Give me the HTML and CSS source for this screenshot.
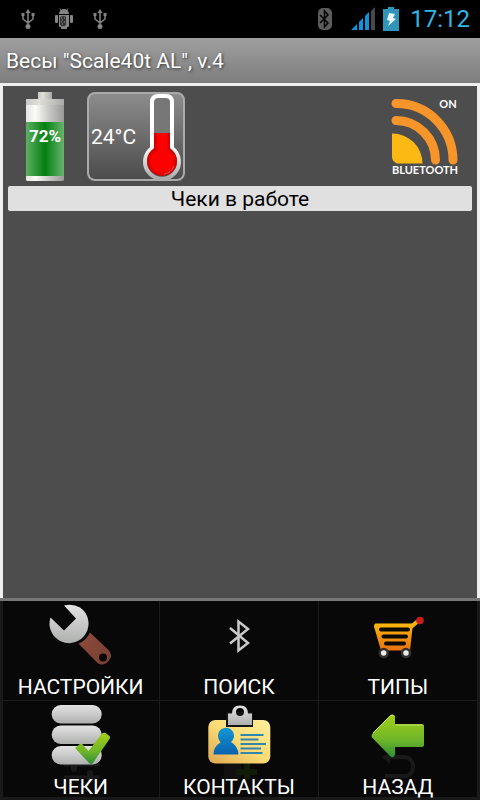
FILE: index.html
```
<!DOCTYPE html>
<html lang="ru">
<head>
<meta charset="utf-8">
<meta name="viewport" content="width=device-width, initial-scale=1">
<title>Весы</title>
<link rel="stylesheet" href="styles.css">
</head>
<body>
<div class="status">
  <div class="status-group">
    <svg width="16" height="22" viewBox="0 0 16 22"><g class="usb"><path d="M8 18V3M3 7v4l5 4 5-4V7"/><path class="solid" d="M5.500 5 8 1l2.500 4zM1.500 5h3v3h-3zM11.500 5h3v3h-3z"/><circle class="solid" cx="8" cy="18.500" r="2.500"/></g></svg>
    <svg width="20" height="22" viewBox="0 0 20 22"><g fill="#858585"><path d="M5 6a5 5 0 0 1 10 0z"/><path d="M5 7h10v11q0 1-1 1h-1v2H7v-2H6q-1 0-1-1z"/><rect x="1" y="7" width="3" height="8" rx="1"/><rect x="16" y="7" width="3" height="8" rx="1"/></g><path d="M6 .500 7.500 3M14 .500 12.500 3" stroke="#858585"/><path d="M6 9q4-2 6 0v8q-2 2-5 1l-1-2z" fill="#333"/><path d="M7 10h1M10 10h1M8 12h1M7 14h1M10 14h1M8 16h1" stroke="#999"/></svg>
    <svg width="16" height="22" viewBox="0 0 16 22"><g class="usb"><path d="M8 18V3M3 7v4l5 4 5-4V7"/><path class="solid" d="M5.500 5 8 1l2.500 4zM1.500 5h3v3h-3zM11.500 5h3v3h-3z"/><circle class="solid" cx="8" cy="18.500" r="2.500"/></g></svg>
  </div>
  <div class="status-group status-right">
    <svg width="16" height="24" viewBox="0 0 16 24"><rect x="1" y="1" width="14" height="22" rx="5" fill="#5c5c5c"/><path d="m3 8 8 8-3.500 4V4L11 8l-8 8" fill="none" stroke="#000" stroke-width="1.500"/></svg>
    <svg class="signal" width="24" height="24" viewBox="0 0 24 24"><path d="m0 23 6-6v6zM8 23v-8l4-4v12zM14 23V9l4-4v18z" fill="#0c94dc"/><path d="M20 23V4l4-4v23z" fill="#484848"/></svg>
    <svg width="16" height="24" viewBox="0 0 16 24"><path d="M0 2h5V0h6v2h5v22H0z" fill="#3194b9"/><path d="m6 6 6 1-2 4 3 1-8 7 2-5-3-1z" fill="#e8f6fc"/></svg>
    <time class="clock">17:12</time>
  </div>
</div>
<header class="title"><h1>Весы "Scale40t AL", v.4</h1></header>
<main class="screen">
  <div class="gauges">
    <div class="battery">
      <svg width="38" height="89" viewBox="0 0 38 89">
        <defs>
          <linearGradient id="metal"><stop offset="0" stop-color="#e6e4e0"/><stop offset=".25" stop-color="#fbfaf6"/><stop offset=".6" stop-color="#c8c9c7"/><stop offset="1" stop-color="#999"/></linearGradient>
          <linearGradient id="shoulder"><stop offset="0" stop-color="#c8c8c8"/><stop offset=".35" stop-color="#e0dfda"/><stop offset="1" stop-color="#aaa"/></linearGradient>
          <linearGradient id="charge"><stop offset="0" stop-color="#5faf63"/><stop offset=".5" stop-color="#028010"/><stop offset="1" stop-color="#68b36c"/></linearGradient>
        </defs>
        <path d="M12 0h14v7H12z" fill="url(#shoulder)"/>
        <path d="M0 7h38v81q0 1-2 1H2q-2 0-2-1z" fill="url(#metal)"/>
        <path d="M0 7h38v6H0z" fill="url(#shoulder)"/>
        <path d="M0 30h38v54H0z" fill="url(#charge)"/>
      </svg>
      <span class="percent">72%</span>
    </div>
    <button class="temperature" type="button">
      <span>24°C</span>
      <svg width="40" height="86" viewBox="142 94 40 86">
        <defs><radialGradient id="mercury"><stop offset=".7" stop-color="#fe0000"/><stop offset="1" stop-color="#c90000"/></radialGradient>
        <linearGradient id="tube"><stop offset="0" stop-color="#c80000"/><stop offset=".3" stop-color="#f00"/><stop offset=".8" stop-color="#f00"/><stop offset="1" stop-color="#c00000"/></linearGradient>
        <linearGradient id="glass" x1="0" y1="0" x2="0" y2="1"><stop offset=".6" stop-color="#fff"/><stop offset="1" stop-color="#aaa"/></linearGradient></defs>
        <path d="M154 147v-42q0-7 5-7h6q5 0 5 7v42" fill="#777"/>
        <path d="M152 148v-46q0-6 6-6h8q6 0 6 6v46a17 17 0 1 1-20 0z" fill="none" stroke="url(#glass)" stroke-width="4"/>
        <circle cx="162" cy="161" r="15" fill="url(#mercury)"/>
        <path d="M154 133h16v18h-16z" fill="url(#tube)"/>
        <path d="M164 174q7-1 10-8" fill="none" stroke="#ff5a4a"/>
      </svg>
    </button>
    <svg class="link-state" width="70" height="80" viewBox="390 98 70 80">
      <path d="M392 133.500a30 30 0 0 1 30.500 30H397q-5-2-5-7z" fill="#fdb913"/>
      <path d="M396 103.500a56.500 57 0 0 1 57 56.500M396 120.500a39.500 40 0 0 1 39.500 39.500" fill="none" stroke="#f7942a" stroke-width="9" stroke-linecap="round"/>
      <text x="448" y="108" class="link-text">ON</text>
      <text x="425" y="174" class="link-text">BLUETOOTH</text>
    </svg>
  </div>
  <h2 class="list-title">Чеки в работе</h2>
</main>
<nav class="menu">
  <button type="button">
    <svg width="72" height="74" viewBox="44 601 72 74">
      <defs><linearGradient id="steel" x1="0" y1="0" x2="0" y2="1"><stop offset="0" stop-color="#e3e3e3"/><stop offset="1" stop-color="#aeb0ae"/></linearGradient>
      <linearGradient id="grip" x1="0" y1="0" x2="1" y2="1"><stop offset="0" stop-color="#914a3d"/><stop offset="1" stop-color="#744032"/></linearGradient></defs>
      <path d="M63 605.500q9-2 16 2a19.500 19.500 0 1 1-29.500 10L63 630.500l12-12z" fill="url(#steel)"/>
      <path d="m89 632.500 19 18q4 5 0 10-5 6-11 3l-19.500-20q8-3 11.500-11zM106 657.500a4 4 0 1 0-8 0 4 4 0 0 0 8 0z" fill="url(#grip)" fill-rule="evenodd"/>
    </svg>
    <span>НАСТРОЙКИ</span>
  </button>
  <button type="button">
    <svg width="72" height="74" viewBox="203 601 72 74"><path d="m230 628 18 15-9.500 7.500v-29L248 629l-18 14.500" fill="none" stroke="#c9c9c9" stroke-width="2.500"/></svg>
    <span>ПОИСК</span>
  </button>
  <button type="button">
    <svg width="72" height="74" viewBox="362 601 72 74">
      <defs><linearGradient id="cart" x1="0" y1="0" x2="0" y2="1"><stop offset="0" stop-color="#fab80c"/><stop offset="1" stop-color="#e8710f"/></linearGradient></defs>
      <path d="m411 627 7-6" stroke="#f5b50c" stroke-width="4"/>
      <path d="M376 623.500h37l-3 27h-29l-7-24q0-3 2-3z" fill="url(#cart)"/>
      <path d="M381 629.500h27M383.500 636.500h22.500M386 643.500h18" stroke="#0b0906" stroke-width="4" stroke-linecap="round"/>
      <circle cx="420" cy="620.500" r="3.800" fill="#c81e1c"/>
      <g fill="#eee" stroke="#343030" stroke-width="2.500"><circle cx="383.700" cy="653" r="4"/><circle cx="406" cy="653" r="4"/></g>
    </svg>
    <span>ТИПЫ</span>
  </button>
  <button type="button">
    <svg width="72" height="74" viewBox="45 701 72 74">
      <defs><linearGradient id="leaf" x1="0" y1="0" x2="0" y2="1"><stop offset="0" stop-color="#a5cf16"/><stop offset=".6" stop-color="#6eb52a"/><stop offset="1" stop-color="#2f8d36"/></linearGradient></defs>
      <path d="M64 765h36M64 777h36M74 761v8M90 773v8" stroke="#191919" stroke-width="3"/><path d="M74 764v5M90 773v5" stroke="#191919" stroke-width="6" stroke-linecap="round"/>
      <g fill="url(#steel)"><rect x="51.700" y="705" width="50" height="18.500" rx="9"/><rect x="51.700" y="725.500" width="50" height="18.500" rx="9"/><rect x="51.700" y="746" width="50" height="18.500" rx="9"/></g>
      <path d="m75 748 5-4q2-1 3 1l5.500 6 13-17q2-2 4-1l4 3q1 1 0 3L93 763q-2 2-4 0z" fill="url(#leaf)"/>
    </svg>
    <span>ЧЕКИ</span>
  </button>
  <button type="button">
    <svg width="72" height="74" viewBox="203 701 72 74">
      <defs><linearGradient id="card" x1="0" y1="1" x2="1" y2="0"><stop offset="0" stop-color="#dda750"/><stop offset=".5" stop-color="#fbdb75"/><stop offset="1" stop-color="#fdee9c"/></linearGradient>
      <linearGradient id="person" x1="0" y1="0" x2="0" y2="1"><stop offset="0" stop-color="#1396d4"/><stop offset="1" stop-color="#0862ad"/></linearGradient></defs>
      <path d="M224 762h17v18h-17z" fill="#101010"/><path d="M247 762v18M236 772h21" stroke="#101b08" stroke-width="6"/>
      <rect x="208.300" y="720" width="62" height="43.500" rx="7" fill="url(#card)"/>
      <path d="M226 712h27v15h-27z" fill="#141414"/>
      <path d="M228 713.500h4q0-8 8-8t8 8h4v11.500h-24zM244 712a4 4 0 1 0-8 0 4 4 0 0 0 8 0z" fill="url(#steel)" fill-rule="evenodd"/>
      <path d="M218 736a8 8 0 1 1 13 6q7 4 7.500 12.500h-25q0-8 7-12-2.500-3-2.500-6.500z" fill="url(#person)"/>
      <path d="M240.500 735h23M240.500 739.500h18M240.500 744H266M240.500 748.500H261M240.500 753h22" stroke="#3186ad" stroke-width="2"/>
    </svg>
    <span>КОНТАКТЫ</span>
  </button>
  <button type="button">
    <svg width="72" height="74" viewBox="362 701 72 74">
      <path d="M386 757h18c12 0 12 19 1 19h-20" fill="none" stroke="#191919" stroke-width="4"/><path d="m382 757 8-4v11z" fill="#191919"/>
      <path d="m372.500 733.500 17-17.500q3-3 5.500 0v8h27q2 0 2 2v19q0 2-2 2h-27v8q-2 4-5 1l-17.500-18q-2-2 0-4.500z" fill="url(#leaf)"/>
      <path d="m373 733 17-17q2-2 4 0M396 725h26" fill="none" stroke="#bfdf68"/>
    </svg>
    <span>НАЗАД</span>
  </button>
</nav>
</body>
</html>
```
FILE: styles.css
```
* { box-sizing: border-box; }
body {
  margin: 0;
  min-height: 100vh;
  display: flex;
  flex-direction: column;
  background: #4d4d4d;
  font-family: Roboto, "Liberation Sans", sans-serif;
  font-size: 21px;
  color: #fff;
}
svg { display: block; flex: none; overflow: visible; }
h1, h2 { margin: 0; font-size: 21px; font-weight: 400; }
button { font: inherit; color: inherit; cursor: pointer; }

.status {
  height: 38px;
  padding: 0 10px 0 20px;
  display: flex;
  align-items: center;
  justify-content: space-between;
  background: #000;
}
.status-group { display: flex; align-items: center; gap: 18px; }
.status-right { gap: 8px; }
.signal { margin-left: 10px; }
.usb { fill: none; stroke: #858585; stroke-width: 1.5; }
.usb .solid { fill: #858585; stroke: none; }
.clock { margin-left: 3px; font-size: 24px; line-height: 38px; color: #33b5e5; }

.title {
  height: 45px;
  padding: 0 6px;
  display: flex;
  align-items: center;
  background: linear-gradient(#9f9f9f, #7d7d7d);
  text-shadow: 1px 1px 3px #333;
}

.screen {
  flex: 1;
  padding: 6px 5px;
  border: 3px solid #efefef;
  border-bottom: 0;
  background: #4d4d4d;
}
.gauges { display: flex; align-items: flex-start; padding: 0 12px 0 18px; }
.battery { position: relative; }
.percent {
  position: absolute;
  inset: 34px 0 auto;
  display: flex;
  justify-content: center;
  font-size: 17px;
  line-height: 20px;
  font-weight: 700;
}
.temperature {
  height: 89px;
  margin-left: 23px;
  padding: 0 1px 0 2px;
  display: flex;
  align-items: center;
  gap: 6px;
  border: 2px solid #aaa;
  border-radius: 8px;
  background: linear-gradient(#8c8c8c, #4c4c4c);
}
.link-state { margin: 6px 0 0 auto; }
.link-text { font: 700 11px Lato, "Open Sans", sans-serif; fill: #fff; text-anchor: middle; }
.list-title {
  margin-top: 5px;
  padding-top: 2px;
  border-radius: 2px;
  background: #e0e0e0;
  color: #000;
  line-height: 23px;
  text-align: center;
}

.menu {
  display: grid;
  grid-template-columns: repeat(3, 1fr);
  padding: 0 3px 0 2px;
  border-top: 3px solid #777;
  background: #080808;
  box-shadow: inset 3px 0 #191919, inset -3px -3px #191919;
}
.menu button {
  display: flex;
  flex-direction: column;
  align-items: center;
  padding: 0;
  border: 0;
  border-right: 1px solid #1c1c1c;
  border-bottom: 1px solid #1c1c1c;
  background: none;
}
.menu button:nth-child(3n) { border-right: 0; }
.menu button:nth-child(n+4) { border-bottom: 0; }
.menu span { position: relative; line-height: 25px; }
```
